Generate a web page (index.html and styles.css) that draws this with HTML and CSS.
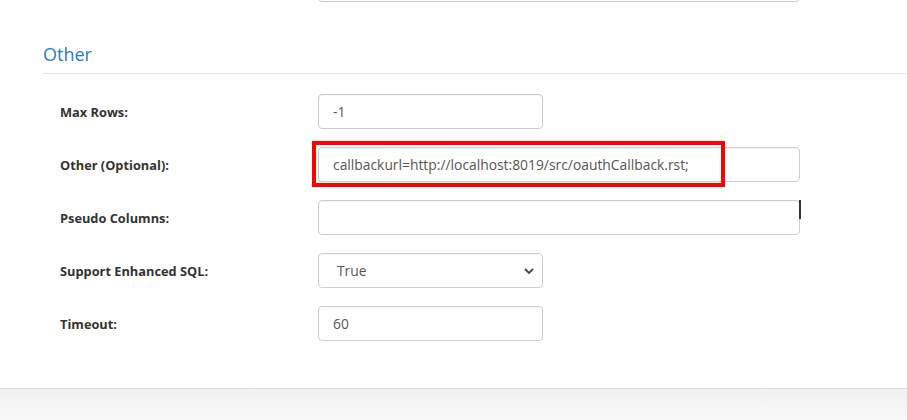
FILE: index.html
```html
<!DOCTYPE html>
<html>
<head>
<meta charset="utf-8">
<link rel="stylesheet" href="styles.css">
</head>
<body>
<div class="page">
  <div class="top-row">
    <input class="field wide" type="text" value="">
  </div>
  <section class="section">
    <h2 class="section-title">Other</h2>
    <div class="rows">
      <div class="row">
        <label class="label">Max Rows:</label>
        <input class="field short" type="text" value="-1">
      </div>
      <div class="row">
        <label class="label">Other (Optional):</label>
        <div class="field-wrap">
          <input class="field wide" type="text" value="callbackurl=http://localhost:8019/src/oauthCallback.rst;">
          <span class="highlight"></span>
        </div>
      </div>
      <div class="row">
        <label class="label">Pseudo Columns:</label>
        <div class="field-wrap">
          <input class="field wide" type="text" value="">
          <span class="caret-line"></span>
        </div>
      </div>
      <div class="row">
        <label class="label">Support Enhanced SQL:</label>
        <div class="field-wrap select-wrap">
          <select class="field short select">
            <option>True</option>
            <option>False</option>
          </select>
          <svg class="chevron" width="10" height="6" viewBox="0 0 10 6"><path d="M1 1 L5 5 L9 1" fill="none" stroke="#444" stroke-width="1.8"/></svg>
        </div>
      </div>
      <div class="row">
        <label class="label">Timeout:</label>
        <input class="field short" type="text" value="60">
      </div>
    </div>
  </section>
  <footer class="footer"></footer>
</div>
</body>
</html>
```

FILE: styles.css
```css
* { box-sizing: border-box; }
html, body { margin: 0; padding: 0; background: #fff; overflow: hidden; }
body { font-family: "Open Sans", "Noto Sans", sans-serif; color: #333; }
.page { width: 907px; height: 420px; overflow: hidden; display: flex; flex-direction: column; }

.top-row { padding-left: 318px; margin-top: -33px; }

.field {
  display: block;
  height: 35px;
  border: 1px solid #ccc;
  border-radius: 4px;
  background: #fff;
  box-shadow: inset 0 1px 1px rgba(0,0,0,0.04);
  font-family: "Open Sans", "Noto Sans", sans-serif;
  font-size: 13.85px;
  color: #555;
  padding: 0 14px;
  outline: none;
}
.wide { width: 482px; }
.short { width: 225px; }

.section { margin-left: 43px; margin-top: 40px; }
.section-title {
  margin: 0;
  font-size: 18px;
  line-height: 24px;
  font-weight: 400;
  color: #2b7bbd;
  padding-bottom: 7px;
  border-bottom: 1px solid #e2e2e2;
}

.rows { display: flex; flex-direction: column; gap: 18px; margin-top: 20px; }
.row { display: grid; grid-template-columns: 275px 1fr; align-items: center; height: 35px; }
.label { padding-left: 17px; font-size: 12.8px; font-weight: 700; color: #333; }

.field-wrap { position: relative; width: fit-content; }
.highlight {
  position: absolute;
  left: -6px; top: -6px;
  width: 413px; height: 46px;
  border: 4px solid #f00;
  pointer-events: none;
}
.caret-line {
  position: absolute;
  left: 481px; top: 0;
  width: 1.5px; height: 19px;
  background: #333;
}

.select { appearance: none; -webkit-appearance: none; padding-left: 18px; }
.chevron { position: absolute; left: 206px; top: 15px; pointer-events: none; }

.footer {
  margin-top: 47px;
  flex: 1;
  border-top: 1px solid #dcdcdc;
  background: linear-gradient(#f1f1f1, #f8f8f8);
}
```
